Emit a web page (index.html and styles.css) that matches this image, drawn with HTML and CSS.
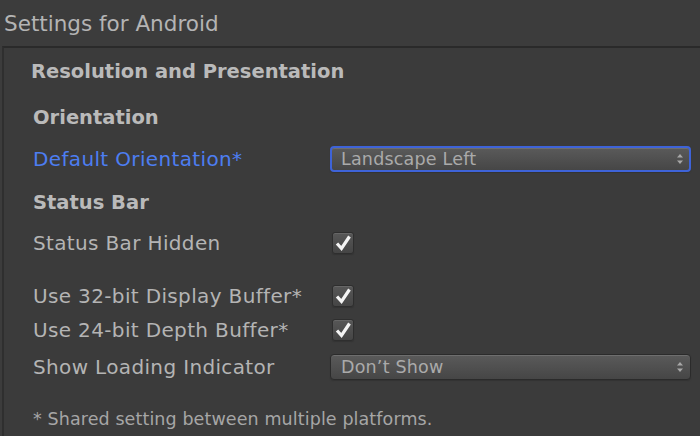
FILE: index.html
```html
<!DOCTYPE html>
<html>
<head>
<meta charset="utf-8">
<link rel="stylesheet" href="styles.css">
</head>
<body>
<div class="page">
  <div class="title">Settings for Android</div>
  <div class="panel">
    <div class="section-title">Resolution and Presentation</div>
    <div class="group">
      <div class="subhead">Orientation</div>
      <div class="row r-orient">
        <span class="label active">Default Orientation*</span>
        <div class="select focused"><span>Landscape Left</span>
          <svg class="arrows" width="8" height="12" viewBox="0 0 8 12"><path d="M4 1 L7 4.5 H1 Z M4 11 L7 7.5 H1 Z" fill="#a8a8a8"/></svg>
        </div>
      </div>
      <div class="subhead sh2">Status Bar</div>
      <div class="row r-hidden">
        <span class="label">Status Bar Hidden</span>
        <span class="check"><svg width="18" height="18" viewBox="0 0 18 18"><path d="M3 9.5 L7.5 14.5 L15.5 2.5" fill="none" stroke="#f4f4f4" stroke-width="3.2"/></svg></span>
      </div>
      <div class="row r32">
        <span class="label">Use 32-bit Display Buffer*</span>
        <span class="check"><svg width="18" height="18" viewBox="0 0 18 18"><path d="M3 9.5 L7.5 14.5 L15.5 2.5" fill="none" stroke="#f4f4f4" stroke-width="3.2"/></svg></span>
      </div>
      <div class="row r24">
        <span class="label">Use 24-bit Depth Buffer*</span>
        <span class="check"><svg width="18" height="18" viewBox="0 0 18 18"><path d="M3 9.5 L7.5 14.5 L15.5 2.5" fill="none" stroke="#f4f4f4" stroke-width="3.2"/></svg></span>
      </div>
      <div class="row rload">
        <span class="label">Show Loading Indicator</span>
        <div class="select"><span>Don’t Show</span>
          <svg class="arrows" width="8" height="12" viewBox="0 0 8 12"><path d="M4 1 L7 4.5 H1 Z M4 11 L7 7.5 H1 Z" fill="#a8a8a8"/></svg>
        </div>
      </div>
      <div class="note">* Shared setting between multiple platforms.</div>
    </div>
  </div>
</div>
</body>
</html>
```
FILE: styles.css
```css
html, body {
  margin: 0;
  padding: 0;
  background: #3c3c3c;
  width: 700px;
  height: 436px;
  overflow: hidden;
}
.page {
  font-family: "DejaVu Sans", "Liberation Sans", sans-serif;
  color: #b4b4b4;
  height: 436px;
  display: flex;
  flex-direction: column;
}
.title {
  font-size: 21.5px;
  line-height: 26px;
  color: #b4b4b4;
  padding: 11px 0 0 4px;
  height: 34px;
  box-sizing: border-box;
  white-space: nowrap;
}
.panel {
  margin: 12px 0 0 2px;
  border-top: 2px solid #2a2a2a;
  border-left: 2px solid #2f2f2f;
  flex: 1;
  background: #3b3b3b;
  padding: 13px 0 0 27px;
}
.section-title {
  font-weight: bold;
  font-size: 19.5px;
  color: #bababa;
  height: 22px;
  line-height: 22px;
  white-space: nowrap;
}
.group {
  padding-left: 2px;
  margin-top: 24px;
}
.subhead {
  font-weight: bold;
  font-size: 19.5px;
  color: #bababa;
  height: 22px;
  line-height: 22px;
}
.sh2 { margin-top: 20px; }
.row {
  display: flex;
  align-items: center;
  height: 26px;
}
.r-orient { margin-top: 17px; }
.r-hidden { margin-top: 16px; }
.r32 { margin-top: 27px; }
.r24 { margin-top: 8px; }
.rload { margin-top: 11px; }
.label {
  font-size: 20px;
  letter-spacing: 0.35px;
  width: 297px;
  flex: none;
  white-space: nowrap;
}
.label.active { color: #4d7ef2; }
.select {
  width: 361px;
  height: 26px;
  box-sizing: border-box;
  border: 1px solid #2b2b2b;
  border-radius: 4px;
  background: linear-gradient(#5a5a5a, #464646);
  box-shadow: inset 0 1px 0 #6e6e6e, 0 1px 1px #333;
  display: flex;
  align-items: center;
  justify-content: space-between;
  padding: 0 6px 0 10px;
  font-size: 17.5px;
  color: #aaaaaa;
  letter-spacing: 0.2px;
  white-space: nowrap;
}
.select.focused {
  border: 2px solid #3e63d8;
  padding-left: 9px;
  padding-right: 5px;
}
.arrows { flex: none; }
.check {
  width: 22px;
  height: 22px;
  margin-left: 2px;
  box-sizing: border-box;
  border: 1px solid #2e2e2e;
  border-radius: 3px;
  background: linear-gradient(#575757, #454545);
  box-shadow: inset 0 1px 0 #666, 0 1px 1px #333;
  display: flex;
  align-items: center;
  justify-content: center;
}
.note {
  font-size: 17.5px;
  line-height: 20px;
  letter-spacing: 0.1px;
  color: #a6a6a6;
  margin-top: 29px;
  white-space: nowrap;
}
```
